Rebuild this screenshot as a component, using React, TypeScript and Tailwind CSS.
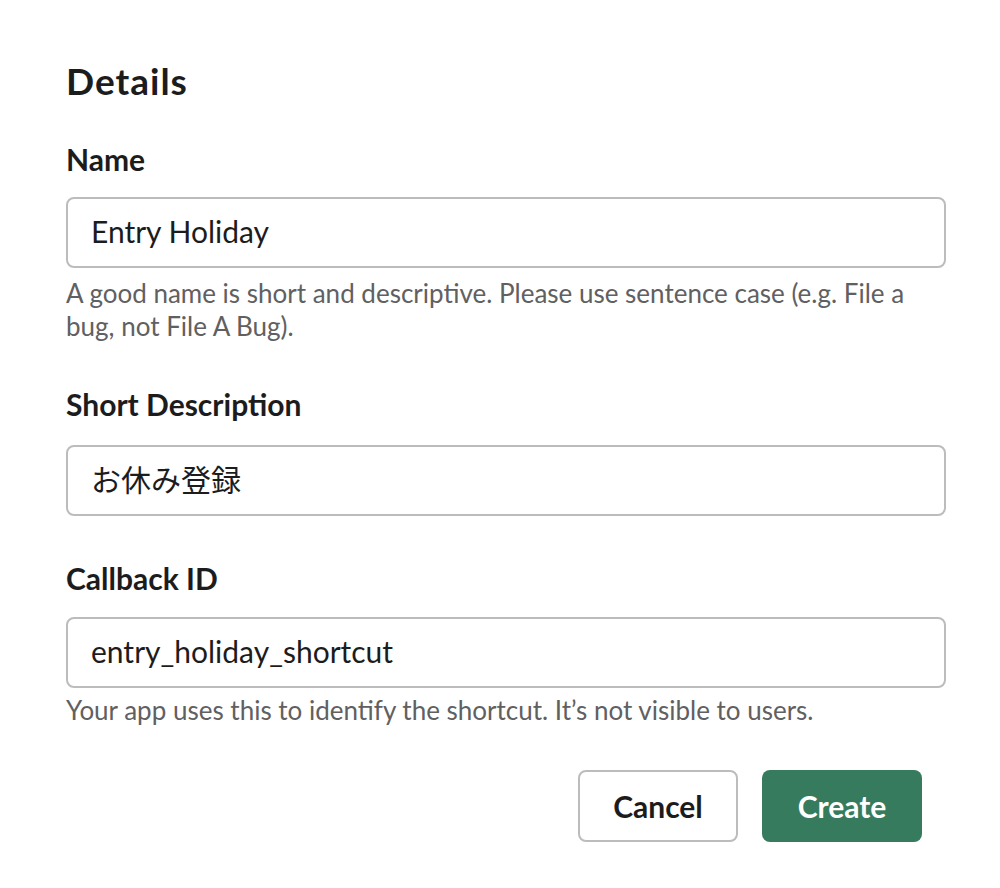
import React from "react";

const font = { fontFamily: '"Lato", "Noto Sans CJK JP", sans-serif' };

function Field({
  label,
  value,
  labelClass,
  inputClass,
}: {
  label: string;
  value: string;
  labelClass: string;
  inputClass: string;
}) {
  return (
    <>
      <div className={`text-[30px] leading-[36px] font-bold ${labelClass}`}>{label}</div>
      <div
        className={`h-[71px] flex items-center pl-[23px] pb-[4px] border-2 border-[#bcbcbc] rounded-[8px] text-[30px] leading-[34px] ${inputClass}`}
      >
        {value}
      </div>
    </>
  );
}

export default function App() {
  return (
    <div
      className="w-full min-h-[888px] bg-white text-[#1d1c1d] pl-[66px] pr-[54px] pt-[59px]"
      style={font}
    >
      <h1 className="text-[37px] leading-[44px] font-bold tracking-[1px]">Details</h1>

      <Field label="Name" value="Entry Holiday" labelClass="mt-[38px]" inputClass="mt-[20px]" />
      <p className="mt-[9px] text-[26px] leading-[33px] text-[#616061]">
        A good name is short and descriptive. Please use sentence case (e.g. File a bug, not File A Bug).
      </p>

      <Field label="Short Description" value="お休み登録" labelClass="mt-[43px]" inputClass="mt-[23px]" />

      <Field label="Callback ID" value="entry_holiday_shortcut" labelClass="mt-[44px]" inputClass="mt-[21px]" />
      <p className="mt-[6px] text-[26px] leading-[33px] text-[#616061]">
        Your app uses this to identify the shortcut. It’s not visible to users.
      </p>

      <div className="mt-[43px] mr-[24px] flex justify-end gap-[24px]">
        <button className="w-[160px] h-[72px] border-2 border-[#bcbcbc] rounded-[8px] bg-white text-[30px] font-bold text-[#1d1c1d]">
          Cancel
        </button>
        <button className="w-[160px] h-[72px] rounded-[8px] bg-[#367b5e] text-[30px] font-bold text-white">
          Create
        </button>
      </div>
    </div>
  );
}
